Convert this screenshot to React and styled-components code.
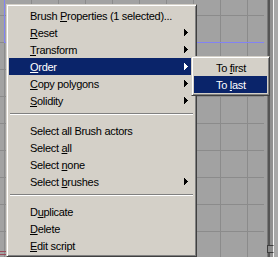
import React from "react";
import styled, { createGlobalStyle } from "styled-components";

const Global = createGlobalStyle`
  html, body { margin: 0; padding: 0; }
  body {
    width: 278px;
    height: 257px;
    overflow: hidden;
    background: #a2a2a2;
    font-family: "Liberation Sans", Arial, sans-serif;
  }
`;

const Screen = styled.div`
  display: flex;
  width: 278px;
  height: 257px;
  overflow: hidden;
`;

const Viewport = styled.div`
  position: relative;
  flex: 0 0 267px;
  height: 100%;
  background: #a2a2a2;
`;

const Canvas = styled.svg`
  display: block;
  width: 100%;
  height: 100%;
`;

const RightFrame = styled.div`
  position: relative;
  display: flex;
  flex: 1;
  height: 100%;
`;

const Strip = styled.div`
  flex: 0 0 ${(p) => p.$w}px;
  background: ${(p) => p.$c};
`;

const Corner = styled.div`
  position: absolute;
  left: 0;
  top: 245px;
  width: 7px;
  height: 8px;
  box-sizing: border-box;
  border: 1px solid #3c3c3c;
  border-right-color: #f0f0f0;
  background: #8c8c8c;
`;

const Menu = styled.div`
  position: absolute;
  left: ${(p) => p.$x}px;
  top: ${(p) => p.$y}px;
  width: ${(p) => p.$w}px;
  box-sizing: border-box;
  padding: 2px;
  background: #d4d0c8;
  border: 1px solid;
  border-color: #d4d0c8 #404040 #404040 #d4d0c8;
  box-shadow: inset 1px 1px 0 #ffffff, inset -1px -1px 0 #808080;
  z-index: ${(p) => p.$z || 1};
`;

const Item = styled.div`
  display: flex;
  align-items: center;
  height: 17px;
  padding: 0 6px 0 ${(p) => p.$indent || 21}px;
  font-size: 11px;
  letter-spacing: -0.3px;
  white-space: nowrap;
  color: ${(p) => (p.$active ? "#ffffff" : "#000000")};
  background: ${(p) => (p.$active ? "#0a246a" : "transparent")};
  u { text-underline-offset: 1px; }
`;

const ArrowBox = styled.svg`
  margin-left: auto;
  flex: 0 0 4px;
  display: block;
`;

const Separator = styled.div`
  height: 9px;
  &::before {
    content: "";
    display: block;
    margin: 4px 1px 0;
    height: 1px;
    background: #808080;
    border-bottom: 1px solid #ffffff;
  }
`;

const Arrow = ({ color }) => (
  <ArrowBox width="4" height="7" viewBox="0 0 4 7" shapeRendering="crispEdges">
    <rect x="0" y="0" width="1" height="7" fill={color} />
    <rect x="1" y="1" width="1" height="5" fill={color} />
    <rect x="2" y="2" width="1" height="3" fill={color} />
    <rect x="3" y="3" width="1" height="1" fill={color} />
  </ArrowBox>
);

const mainItems = [
  { pre: "Brush ", key: "P", post: "roperties (1 selected)..." },
  { key: "R", post: "eset", sub: true },
  { key: "T", post: "ransform", sub: true },
  { key: "O", post: "rder", sub: true, active: true },
  { key: "C", post: "opy polygons", sub: true },
  { key: "S", post: "olidity", sub: true },
  { sep: true },
  { pre: "Select all Brush actors" },
  { pre: "Select ", key: "a", post: "ll" },
  { pre: "Select ", key: "n", post: "one" },
  { pre: "Select ", key: "b", post: "rushes", sub: true },
  { sep: true },
  { pre: "D", key: "u", post: "plicate" },
  { key: "D", post: "elete" },
  { key: "E", post: "dit script" },
];

const subItems = [
  { pre: "To ", key: "f", post: "irst" },
  { pre: "To ", key: "l", post: "ast", active: true },
];

const Label = ({ it }) => (
  <span>
    {it.pre}
    {it.key && <u>{it.key}</u>}
    {it.post}
  </span>
);

const Grid = () => {
  const v = [];
  for (let x = 4; x <= 264; x += 27) v.push(x + 0.5);
  const h = [];
  for (let y = 15; y <= 240; y += 27) h.push(y + 0.5);
  return (
    <Canvas viewBox="0 0 267 257" shapeRendering="crispEdges">
      {v.map((x) => (
        <line key={"v" + x} x1={x} y1="0" x2={x} y2="257" stroke="#8b8b8b" strokeWidth="1" />
      ))}
      {h.map((y) => (
        <line key={"h" + y} x1="0" y1={y} x2="264" y2={y} stroke="#8b8b8b" strokeWidth="1" />
      ))}
      <line x1="4.5" y1="0" x2="4.5" y2="43" stroke="#8282f4" strokeWidth="1" />
      <line x1="4" y1="42.5" x2="264" y2="42.5" stroke="#8282f4" strokeWidth="1" />
      <line x1="0" y1="251.5" x2="175" y2="251.5" stroke="#9a4a58" strokeWidth="1" />
      <line x1="0" y1="254.5" x2="175" y2="254.5" stroke="#9a4a58" strokeWidth="1" />
      <rect x="175" y="250" width="3" height="6" fill="#8a4050" />
    </Canvas>
  );
};

export default function App() {
  return (
    <>
      <Global />
      <Screen>
        <Viewport>
          <Grid />
          <Menu $x={6} $y={4} $w={191} $z={1}>
            {mainItems.map((it, i) =>
              it.sep ? (
                <Separator key={i} />
              ) : (
                <Item key={i} $active={it.active}>
                  <Label it={it} />
                  {it.sub && <Arrow color={it.active ? "#ffffff" : "#000000"} />}
                </Item>
              )
            )}
          </Menu>
          <Menu $x={191} $y={56} $w={79} $z={2}>
            {subItems.map((it, i) => (
              <Item key={i} $active={it.active} $indent={22}>
                <Label it={it} />
              </Item>
            ))}
          </Menu>
        </Viewport>
        <RightFrame>
          <Strip $w={1} $c="#7a7a7a" />
          <Strip $w={2} $c="#555555" />
          <Strip $w={3} $c="#909090" />
          <Strip $w={1} $c="#f4f4f4" />
          <Strip $w={4} $c="#a8a8a8" />
          <Corner />
        </RightFrame>
      </Screen>
    </>
  );
}
